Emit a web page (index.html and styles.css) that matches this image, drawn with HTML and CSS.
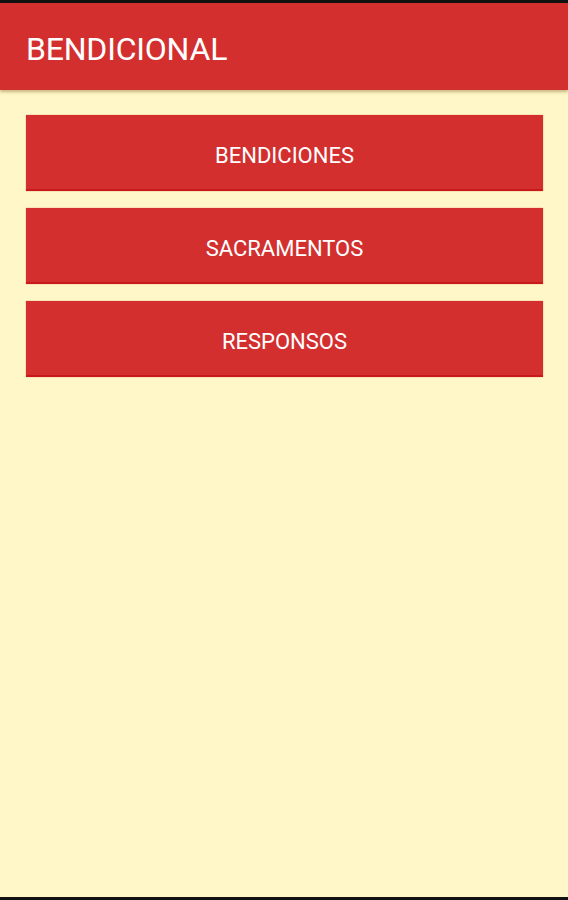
FILE: index.html
```
<!DOCTYPE html>
<html>
<head>
<meta charset="utf-8">
<link rel="stylesheet" href="styles.css">
</head>
<body>
<div class="status"></div>
<header class="appbar"><h1 class="title">BENDICIONAL</h1></header>
<main class="menu">
  <button class="btn">BENDICIONES</button>
  <button class="btn">SACRAMENTOS</button>
  <button class="btn">RESPONSOS</button>
</main>
<div class="navbar"></div>
</body>
</html>
```
FILE: styles.css
```
html, body {
  margin: 0;
  padding: 0;
  height: 100%;
}
body {
  background: #fff7c7;
  font-family: Roboto, "Liberation Sans", sans-serif;
  display: flex;
  flex-direction: column;
  height: 900px;
  overflow: hidden;
}
.status {
  height: 3px;
  background: #111;
  flex: none;
}
.appbar {
  height: 87px;
  background: #d32f2f;
  display: flex;
  align-items: center;
  padding-left: 26px;
  box-shadow: 0 2px 3px rgba(90, 60, 0, 0.35);
  flex: none;
  position: relative;
  z-index: 1;
}
.title {
  margin: 0;
  color: #fff;
  font-size: 32px;
  font-weight: 400;
  line-height: 1;
  padding-top: 4px;
  letter-spacing: -0.2px;
}
.menu {
  flex: 1;
  display: flex;
  flex-direction: column;
  gap: 17px;
  padding: 25px 25px 0 26px;
}
.btn {
  height: 76px;
  background: #d32f2f;
  border: none;
  border-bottom: 2px solid #c81a1a;
  color: #fff;
  font-family: Roboto, "Liberation Sans", sans-serif;
  font-size: 22px;
  font-weight: 400;
  padding: 6px 0 0 0;
  margin: 0;
  width: 100%;
  box-shadow: 0 0 1px rgba(200, 30, 30, 0.6);
}
.navbar {
  height: 3px;
  background: #111;
  flex: none;
}
```
